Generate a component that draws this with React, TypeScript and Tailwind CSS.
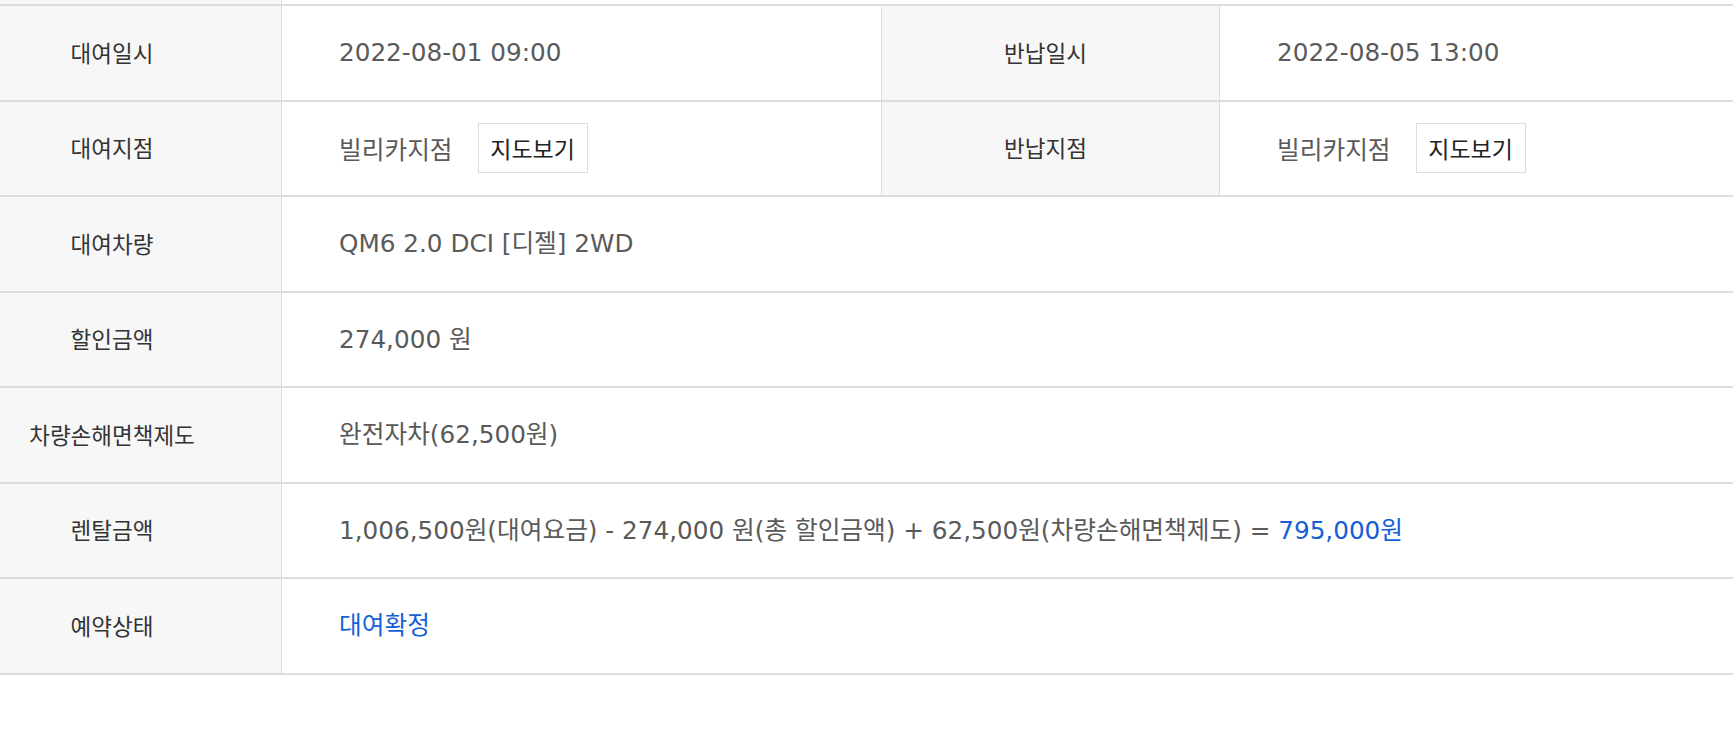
import React from 'react';

const labelFont = { fontFamily: '"Noto Sans CJK KR", "Noto Sans", sans-serif' };
const valueFont = { fontFamily: '"DejaVu Sans", "Noto Sans CJK KR", sans-serif' };

interface CellProps {
  children: React.ReactNode;
  className?: string;
}

function Label({ children, className = '' }: CellProps) {
  return (
    <div
      style={labelFont}
      className={`flex items-center justify-center bg-[#f7f7f7] border-r border-[#dddddd] text-[22.5px] text-[#333333] ${className}`}
    >
      {children}
    </div>
  );
}

function Value({ children, className = '' }: CellProps) {
  return (
    <div style={valueFont} className={`flex items-center pl-[57px] text-[24.7px] text-[#5a5a5a] whitespace-nowrap ${className}`}>
      {children}
    </div>
  );
}

function MapButton() {
  return (
    <button
      type="button"
      style={labelFont}
      className="ml-[25px] flex h-[50px] w-[110px] items-center justify-center border border-[#dddddd] bg-white text-[23px] text-[#222222]"
    >
      지도보기
    </button>
  );
}

function Row({ children }: { children: React.ReactNode }) {
  return <div className="flex h-[95.5px] border-b-2 border-[#dddddd]">{children}</div>;
}

export default function App() {
  const wideRows: { label: string; value: React.ReactNode }[] = [
    { label: '대여차량', value: 'QM6 2.0 DCI [디젤] 2WD' },
    { label: '할인금액', value: '274,000 원' },
    { label: '차량손해면책제도', value: '완전자차(62,500원)' },
    {
      label: '렌탈금액',
      value: (
        <>
          1,006,500원(대여요금) - 274,000 원(총 할인금액) + 62,500원(차량손해면책제도) =&nbsp;
          <span className="text-[#1560d8]">795,000원</span>
        </>
      ),
    },
    { label: '예약상태', value: <span className="text-[#1560d8]">대여확정</span> },
  ];

  return (
    <div className="min-h-screen w-full bg-white">
      {/* tail of the row above */}
      <div className="flex h-[4px]">
        <div className="w-[282px] bg-[#f7f7f7] border-r border-[#dddddd]" />
      </div>

      <div className="border-t-2 border-[#dddddd]">
        <Row>
          <Label className="w-[282px] pr-[57px]">대여일시</Label>
          <Value className="w-[600px] border-r border-[#dddddd]">2022-08-01 09:00</Value>
          <Label className="w-[338px] pr-[10px]">반납일시</Label>
          <Value className="flex-1">2022-08-05 13:00</Value>
        </Row>
        <Row>
          <Label className="w-[282px] pr-[57px]">대여지점</Label>
          <Value className="w-[600px] border-r border-[#dddddd]">
            <span style={labelFont}>빌리카지점</span>
            <MapButton />
          </Value>
          <Label className="w-[338px] pr-[10px]">반납지점</Label>
          <Value className="flex-1">
            <span style={labelFont}>빌리카지점</span>
            <MapButton />
          </Value>
        </Row>
        {wideRows.map((r) => (
          <Row key={r.label}>
            <Label className="w-[282px] pr-[57px]">{r.label}</Label>
            <Value className="flex-1">{r.value}</Value>
          </Row>
        ))}
      </div>
    </div>
  );
}
